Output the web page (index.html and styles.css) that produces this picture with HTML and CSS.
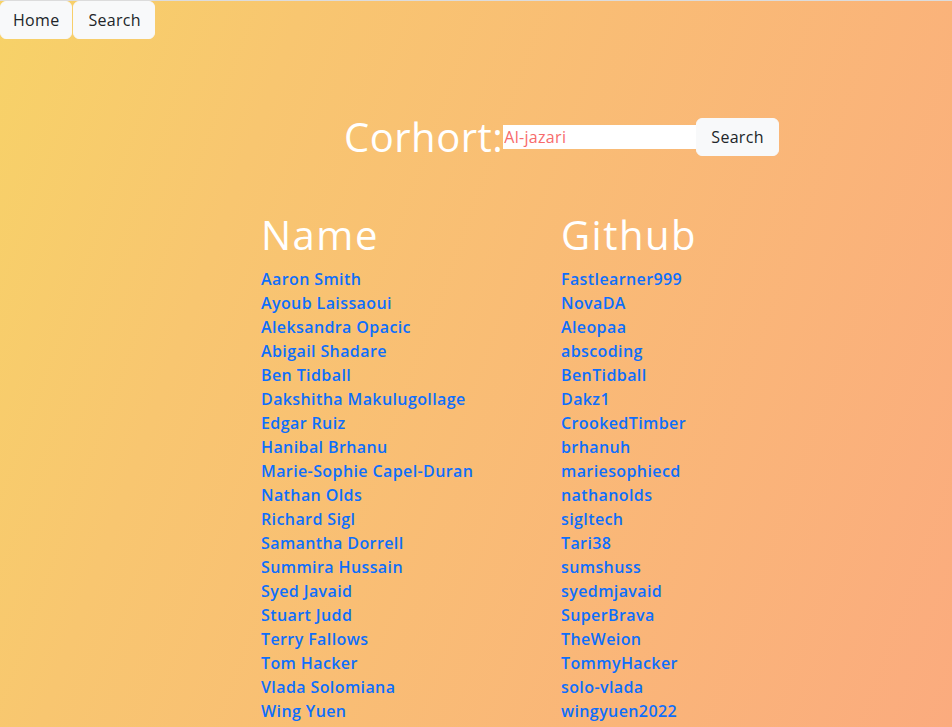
FILE: index.html
```html
<!DOCTYPE html>
<html lang="en">
<head>
<meta charset="utf-8">
<title>Cohort</title>
<link rel="stylesheet" href="styles.css">
</head>
<body>
<nav class="topnav">
  <a class="btn" href="#">Home</a>
  <a class="btn btn-nav-search" href="#">Search</a>
</nav>
<main class="page">
  <form class="cohort-form">
    <h1 class="title">Corhort:</h1>
    <input class="cohort-input" type="text" value="Al-jazari">
    <button class="btn btn-search" type="button">Search</button>
  </form>
  <section class="roster">
    <div class="col col-name">
      <h1 class="col-head">Name</h1>
      <ul class="list">
        <li><a href="#">Aaron Smith</a></li>
        <li><a href="#">Ayoub Laissaoui</a></li>
        <li><a href="#">Aleksandra Opacic</a></li>
        <li><a href="#">Abigail Shadare</a></li>
        <li><a href="#">Ben Tidball</a></li>
        <li><a href="#">Dakshitha Makulugollage</a></li>
        <li><a href="#">Edgar Ruiz</a></li>
        <li><a href="#">Hanibal Brhanu</a></li>
        <li><a href="#">Marie-Sophie Capel-Duran</a></li>
        <li><a href="#">Nathan Olds</a></li>
        <li><a href="#">Richard Sigl</a></li>
        <li><a href="#">Samantha Dorrell</a></li>
        <li><a href="#">Summira Hussain</a></li>
        <li><a href="#">Syed Javaid</a></li>
        <li><a href="#">Stuart Judd</a></li>
        <li><a href="#">Terry Fallows</a></li>
        <li><a href="#">Tom Hacker</a></li>
        <li><a href="#">Vlada Solomiana</a></li>
        <li><a href="#">Wing Yuen</a></li>
      </ul>
    </div>
    <div class="col col-github">
      <h1 class="col-head">Github</h1>
      <ul class="list">
        <li><a href="#">Fastlearner999</a></li>
        <li><a href="#">NovaDA</a></li>
        <li><a href="#">Aleopaa</a></li>
        <li><a href="#">abscoding</a></li>
        <li><a href="#">BenTidball</a></li>
        <li><a href="#">Dakz1</a></li>
        <li><a href="#">CrookedTimber</a></li>
        <li><a href="#">brhanuh</a></li>
        <li><a href="#">mariesophiecd</a></li>
        <li><a href="#">nathanolds</a></li>
        <li><a href="#">sigltech</a></li>
        <li><a href="#">Tari38</a></li>
        <li><a href="#">sumshuss</a></li>
        <li><a href="#">syedmjavaid</a></li>
        <li><a href="#">SuperBrava</a></li>
        <li><a href="#">TheWeion</a></li>
        <li><a href="#">TommyHacker</a></li>
        <li><a href="#">solo-vlada</a></li>
        <li><a href="#">wingyuen2022</a></li>
      </ul>
    </div>
  </section>
</main>
</body>
</html>
```
FILE: styles.css
```css
* { box-sizing: border-box; }

html, body {
  margin: 0;
  padding: 0;
}

body {
  min-height: 100vh;
  border-top: 1px solid #dcdcdc;
  background-color: #fbab7e;
  background-image: linear-gradient(110deg, #f7d268 0%, #f8c670 25%, #fbab7e 100%);
  font-family: "Open Sans", "Liberation Sans", sans-serif;
  font-size: 16px;
  line-height: 1.5;
  color: #212529;
}

.topnav {
  display: flex;
  gap: 1px;
}

.btn {
  display: inline-block;
  padding: 6px 12px;
  font-family: inherit;
  font-size: 16px;
  line-height: 24px;
  letter-spacing: 0.3px;
  color: #212529;
  background: #f8f9fa;
  border: 1px solid #f8f9fa;
  border-radius: 6px;
  text-decoration: none;
  cursor: pointer;
}

.btn-nav-search {
  padding: 6px 13px 6px 14px;
}

.btn-search {
  padding: 6px 14px;
}

.page {
  padding-top: 74px;
}

.cohort-form {
  display: flex;
  align-items: center;
  margin: 0 0 0 344px;
}

.title {
  margin: 0;
  font-size: 40px;
  font-weight: 400;
  line-height: 48px;
  letter-spacing: 0.5px;
  color: #fff;
}

.cohort-input {
  width: 193px;
  height: 24px;
  padding: 0 0 0 1px;
  border: 0;
  outline: none;
  background: #fff;
  font-family: inherit;
  font-size: 16px;
  letter-spacing: 0.3px;
  color: #f76b6b;
}

.roster {
  display: flex;
  margin: 50px 0 0 261px;
}

.col-name { width: 300px; }

.col-head {
  margin: 0 0 8px;
  font-size: 40px;
  font-weight: 400;
  line-height: 48px;
  letter-spacing: 1.5px;
  color: #fff;
}

.list {
  list-style: none;
  margin: 0;
  padding: 0;
}

.list li {
  line-height: 24px;
}

.list a {
  color: #0d6efd;
  font-weight: 600;
  letter-spacing: 0.4px;
  text-decoration: none;
}
```
